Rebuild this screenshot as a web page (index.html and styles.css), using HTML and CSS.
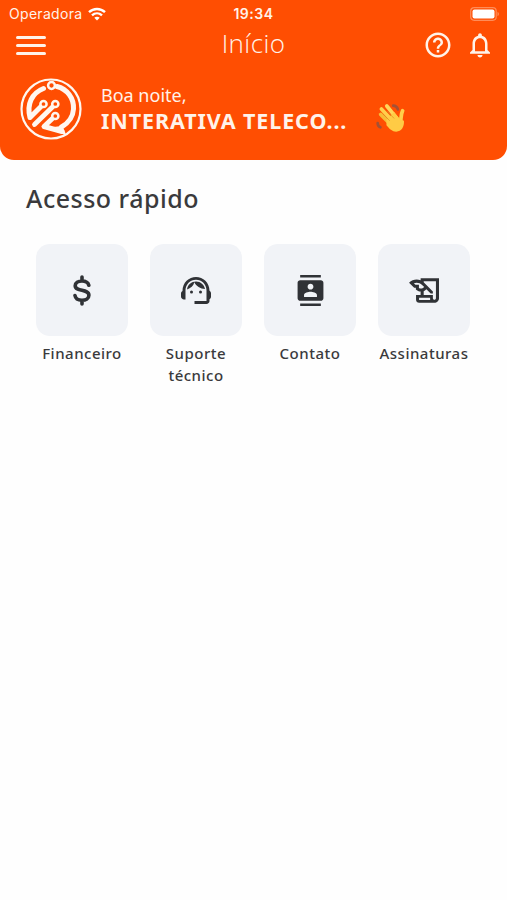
FILE: index.html
```
<!DOCTYPE html>
<html lang="pt-BR">

<head>
    <meta charset="UTF-8">
    <meta name="viewport" content="width=device-width, initial-scale=1.0">
    <title>Início</title>
    <link rel="stylesheet" href="styles.css">
</head>

<body>
    <header>
        <div class="status">
            <div class="carrier">
                <span>Operadora</span>
                <svg width="18" height="14" viewBox="0 0 18 14" fill="none" stroke="#fff" stroke-width="2.4">
                    <path d="M1 5.2C5.5 .9 12.5 .9 17 5.2M4 8.4c2.900-2.700 7.100-2.700 10 0" />
                    <path d="M9 13.500L6.300 10.800c1.500-1.400 3.900-1.400 5.400 0z" fill="#fff" stroke="none" />
                </svg>
            </div>
            <span class="time">19:34</span>
            <svg class="battery" width="30" height="14" viewBox="0 0 30 14">
                <rect x=".7" y=".7" width="25.5" height="12.6" rx="3.5" fill="none" stroke="#ff8c58" stroke-width="1.2" />
                <rect x="2.5" y="2.5" width="22" height="9" rx="2" fill="#fff" />
                <path d="M27.500 4.800c2 .8 2 3.600 0 4.400z" fill="#ff8c58" />
            </svg>
        </div>

        <nav>
            <button class="menu" aria-label="Menu">
                <span></span>
                <span></span>
                <span></span>
            </button>
            <h1>Início</h1>
            <div class="actions">
                <svg width="30" height="30" viewBox="0 0 24 24" fill="#fff3ea">
                    <path d="M11 18h2v-2h-2v2zm1-16C6.480 2 2 6.480 2 12s4.480 10 10 10 10-4.480 10-10S17.520 2 12 2zm0 18c-4.410 0-8-3.590-8-8s3.590-8 8-8 8 3.590 8 8-3.590 8-8 8zm0-14c-2.210 0-4 1.790-4 4h2c0-1.100.9-2 2-2s2 .9 2 2c0 2-3 1.750-3 5h2c0-2.250 3-2.500 3-5 0-2.210-1.790-4-4-4z" />
                </svg>
                <svg width="30" height="30" viewBox="0 0 24 24" fill="#fff3ea">
                    <path d="M12 22c1.100 0 2-.9 2-2h-4c0 1.100.9 2 2 2zm6-6v-5c0-3.070-1.630-5.640-4.500-6.320V4c0-.83-.67-1.500-1.500-1.500s-1.500.67-1.500 1.500v.68C7.640 5.360 6 7.920 6 11v5l-2 2v1h16v-1l-2-2zm-2 1H8v-6c0-2.480 1.510-4.500 4-4.500s4 2.020 4 4.500v6z" />
                </svg>
            </div>
        </nav>

        <div class="profile">
            <svg class="logo" width="62" height="62" viewBox="0 0 62 62" fill="none" stroke="#fff7f0" stroke-linecap="round" stroke-linejoin="round">
                <circle cx="31" cy="31" r="29.5" stroke-width="2.2" />
                <path d="M23.500 10.500C12 15 6.500 26 10 39.500L22 27.500" stroke-width="5" />
                <path d="M14.500 46.500L34 27.500" stroke-width="4.8" />
                <path d="M34 39L24 48.500l18 5" stroke-width="5" />
                <path d="M37 8.500C47 11 54 20 53.500 31c-.5 8-5 14-12 18" stroke-width="5" />
                <path d="M30 50.500l11.500-1.500 3 6.500z" fill="#fff7f0" stroke-width="2" />
                <g fill="#ff4e02" stroke-width="2.5">
                    <circle cx="31.5" cy="7.5" r="3.4" />
                    <circle cx="23.5" cy="26" r="3.1" />
                    <circle cx="35.3" cy="26" r="3.1" />
                    <circle cx="35.3" cy="38" r="3.1" />
                </g>
            </svg>
            <div class="greeting">
                <p class="hello">Boa noite,</p>
                <p class="name">INTERATIVA TELECO...</p>
            </div>
            <svg class="wave" width="32" height="32" viewBox="30 38 95 95" fill="none" stroke-linecap="round">
                <path d="M84 49c6 0 12 5 14 11M38 101c0 6 3 10 8 12" stroke="#a35136" stroke-width="8" />
                <path d="M47 75l25 25" stroke="#f5bd37" stroke-width="11" />
                <path d="M49 59l34 36" stroke="#ffcf4b" stroke-width="11" />
                <path d="M65 50l31 38" stroke="#ffd65a" stroke-width="11" />
                <path d="M112 64c-5 9-4 18-6 34" stroke="#ffd04a" stroke-width="11" />
                <path d="M64 91l23-23 17 21 12 5c1 18-7 32-23 32-12 0-20-8-29-19z" fill="#ffcb45" />
                <path d="M57 77l16 16M67 66l19 20" stroke="#dc8e24" stroke-width="2" />
            </svg>
        </div>
    </header>

    <main>
        <h2>Acesso rápido</h2>
        <div class="shortcuts">
            <a class="shortcut">
                <div class="tile">
                    <svg width="18" height="31" viewBox="0 0 18 31" fill="none" stroke="#303236" stroke-width="3.6" stroke-linecap="round">
                        <path d="M9 2v3M9 26v3M15.800 10.200C15 7.300 12.500 6 9 6 5.200 6 2.200 7.700 2.200 10.700c0 6.300 13.700 3 13.700 9.500C15.900 23.500 12.900 25.200 9 25.200c-3.900 0-6.500-1.600-7-4.700" />
                    </svg>
                </div>
                <p>Financeiro</p>
            </a>
            <a class="shortcut">
                <div class="tile">
                    <svg width="30" height="27" viewBox="2 3 20 18" fill="#303236">
                        <path d="M21 12.220C21 6.730 16.740 3 12 3c-4.690 0-9 3.650-9 9.280-.6.340-1 .98-1 1.720v2c0 1.100.9 2 2 2h1v-6.100c0-3.870 3.130-7 7-7s7 3.130 7 7V19h-8v2h8c1.100 0 2-.9 2-2v-1.220c.59-.31 1-.92 1-1.640v-2.300c0-.7-.41-1.310-1-1.620z" />
                        <circle cx="9" cy="13" r="1" />
                        <circle cx="15" cy="13" r="1" />
                        <path d="M18 11.030C17.520 8.180 15.040 6 12.050 6c-3.030 0-5.700 2-6.030 5.400 2.470-.8 4.330-2.500 4.860-4.840C12.190 9.190 14.880 11 18 11.030z" />
                    </svg>
                </div>
                <p>Suporte técnico</p>
            </a>
            <a class="shortcut">
                <div class="tile">
                    <svg width="31" height="31" viewBox="0 0 24 24" fill="#303236">
                        <path d="M20 0H4v2h16V0zM4 24h16v-2H4v2zM20 4H4c-1.100 0-2 .9-2 2v12c0 1.100.9 2 2 2h16c1.100 0 2-.9 2-2V6c0-1.100-.9-2-2-2zm-8 2.750c1.240 0 2.250 1.010 2.250 2.250s-1.010 2.250-2.250 2.250S9.750 10.240 9.750 9 10.760 6.750 12 6.750zM17 17H7v-1.500c0-1.670 3.330-2.500 5-2.500s5 .83 5 2.500V17z" />
                    </svg>
                </div>
                <p>Contato</p>
            </a>
            <a class="shortcut">
                <div class="tile">
                    <svg width="30" height="25" viewBox="1.4 4 19.6 16" fill="#303236" fill-rule="evenodd">
                        <path d="M9 4v1.380c-.83-.33-1.720-.5-2.610-.5-1.790 0-3.580.68-4.950 2.050l3.330 3.330h1.110v1.110c.86.86 1.980 1.310 3.110 1.360V15H6v3c0 1.100.9 2 2 2h10c1.660 0 3-1.340 3-3V4H9zm-1.110 6.410V8.260H5.610L4.570 7.220c.57-.22 1.190-.34 1.820-.34 1.340 0 2.590.52 3.540 1.460l1.410 1.410-.2.2c-.51.51-1.190.8-1.920.8-.47 0-.93-.12-1.330-.34zM19 17c0 .55-.45 1-1 1s-1-.45-1-1v-2h-6v-2.590c.57-.23 1.100-.57 1.560-1.030l.2-.2L15.590 14H17v-1.410l-6-5.970V6h8v11zM8 16.800h7.200v1.400H8z" />
                    </svg>
                </div>
                <p>Assinaturas</p>
            </a>
        </div>
    </main>
</body>

</html>
```
FILE: styles.css
```
* {
    box-sizing: border-box;
    margin: 0;
    padding: 0;
}

body {
    font-family: "Noto Sans", "Open Sans", sans-serif;
    background-color: #fefefe;
    color: #3a3a3c;
}

header {
    height: 160px;
    background-color: #ff4e02;
    border-radius: 0 0 14px 14px;
    color: #fff3ea;
}

.status {
    display: grid;
    grid-template-columns: 1fr auto 1fr;
    align-items: center;
    height: 27px;
    padding: 0 7px 0 9px;
    font-family: Inter, sans-serif;
    font-size: 14px;
}

.carrier {
    display: flex;
    align-items: center;
    gap: 6px;
    letter-spacing: 0.3px;
}

.time {
    margin-right: 2px;
    font-weight: 600;
    letter-spacing: 0.5px;
}

.battery {
    justify-self: end;
}

nav {
    display: grid;
    grid-template-columns: 1fr auto 1fr;
    align-items: center;
    height: 36px;
    padding: 0 12px 0 16px;
}

.menu {
    display: flex;
    flex-direction: column;
    gap: 5px;
    width: 30px;
    border: none;
    background: none;
}

.menu span {
    width: 30px;
    height: 3px;
    border-radius: 2px;
    background-color: #fff3ea;
}

h1 {
    margin-right: 4px;
    padding-bottom: 3px;
    font-family: "Open Sans", "Noto Sans", sans-serif;
    font-size: 26px;
    font-weight: 350;
    line-height: 33px;
    letter-spacing: 0.4px;
}

.actions {
    display: flex;
    justify-content: flex-end;
    gap: 12px;
}

.profile {
    display: flex;
    align-items: center;
    padding: 15px 20px 0;
}

.greeting {
    width: 256px;
    margin-left: 19px;
    padding-bottom: 3px;
    white-space: nowrap;
}

.hello {
    font-size: 18px;
    font-weight: 400;
    line-height: 25px;
}

.name {
    font-size: 21.5px;
    font-weight: 700;
    line-height: 25px;
    letter-spacing: 0.9px;
}

.wave {
    margin: 17px 0 0 18px;
}

main {
    padding: 20px 26px 20px 25px;
}

h2 {
    padding-left: 1px;
    font-size: 25px;
    font-weight: 500;
    line-height: 36px;
    letter-spacing: 0.5px;
}

.shortcuts {
    display: grid;
    grid-template-columns: repeat(4, 1fr);
    margin-top: 28px;
}

.shortcut {
    display: flex;
    flex-direction: column;
    align-items: center;
}

.tile {
    display: flex;
    justify-content: center;
    align-items: center;
    width: 92px;
    height: 92px;
    border-radius: 14px;
    background-color: #f1f3f7;
}

.shortcut p {
    width: 92px;
    margin-top: 6px;
    display: flex;
    justify-content: center;
    text-align: center;
    font-size: 15px;
    font-weight: 500;
    line-height: 22px;
    letter-spacing: 0.5px;
}
```
